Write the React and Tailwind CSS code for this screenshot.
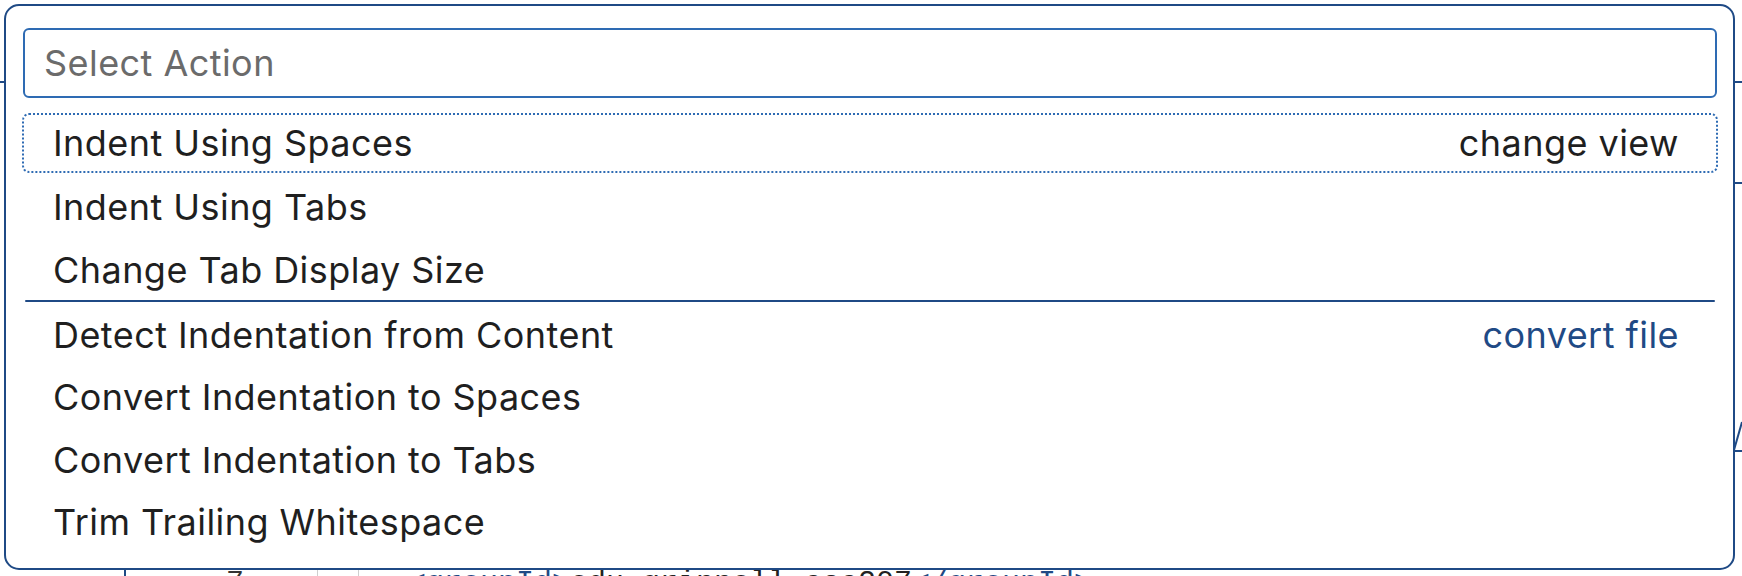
import React from 'react';

const firstGroup = [
  { label: 'Indent Using Spaces', hint: 'change view', focused: true },
  { label: 'Indent Using Tabs' },
  { label: 'Change Tab Display Size' },
];

const secondGroup = [
  { label: 'Detect Indentation from Content', hint: 'convert file', hintColor: 'text-[#1f4a85]' },
  { label: 'Convert Indentation to Spaces' },
  { label: 'Convert Indentation to Tabs' },
  { label: 'Trim Trailing Whitespace' },
];

const ActionRow = ({ label, hint, hintColor, focused, tight }) => (
  <div
    className={`flex items-center justify-between h-[60px] ${tight ? 'mb-[2.5px]' : 'mb-[3.5px]'} pl-[29px] pr-[37px] rounded-[7px] border-2 ${focused ? 'border-dotted border-[#2e6bb3]' : 'border-transparent'}`}
  >
    <span className="text-[#1f1f1f]">{label}</span>
    {hint && <span className={hintColor || 'text-[#1f1f1f]'}>{hint}</span>}
  </div>
);

// page behind the palette, only its edges show
const Backdrop = () => (
  <div className="flex flex-col h-[576px]">
    <div className="h-[83px] border-b-2 border-[#1f4a85]" />
    <div className="h-[101px] flex justify-end">
      <div className="w-[20px] border-b-2 border-[#1f4a85]" />
    </div>
    <div className="h-[268px] flex justify-end items-end">
      <div className="w-[20px] h-[40px] border-b-2 border-[#1f4a85] flex items-end justify-end">
        <svg width="9" height="32" viewBox="0 0 9 32" className="block">
          <line x1="1" y1="32" x2="9" y2="4" stroke="#1f4a85" strokeWidth="2" />
        </svg>
      </div>
    </div>
    <div className="flex-1" />
    <div className="h-[8px] overflow-hidden flex pl-[124px] font-['Liberation_Mono',monospace] text-[30px] leading-[30px]">
      <div className="w-[193px] border-l-2 border-[#1f4a85] text-right pr-[73px] text-[#333]">7</div>
      <div className="w-[41px] border-l border-[#cfcfcf]" />
      <div className="border-l border-[#cfcfcf] pl-[49px] whitespace-nowrap">
        <span className="text-[#1f4a85]">&lt;groupId&gt;</span>
        <span className="text-[#222]">edu.grinnell.csc207</span>
        <span className="text-[#1f4a85]">&lt;/groupId&gt;</span>
      </div>
    </div>
  </div>
);

export default function App() {
  return (
    <div className="relative w-[1742px] h-[576px] overflow-hidden bg-white font-['Inter',sans-serif]">
      <Backdrop />
      <div className="absolute left-[4px] top-[4px] w-[1731px] h-[566px] bg-white border-2 border-[#1f4a85] rounded-[15px] pl-[17px] pr-[16px] pt-[22px] text-[36px] tracking-[0.45px] leading-none">
        <div className="h-[70px] border-2 border-[#2e6bb3] rounded-[6px] flex items-center pl-[19px] text-[#6b6b6b]">
          Select Action
        </div>
        <div className="mt-[15px] -mx-[1px]">
          {firstGroup.map(item => (
            <ActionRow key={item.label} {...item} />
          ))}
          <div className="h-[2px] mx-[3px] -mt-[4px] mb-[3px] bg-[#1f4a85] rounded-full" />
          {secondGroup.map(item => (
            <ActionRow key={item.label} {...item} tight />
          ))}
        </div>
      </div>
    </div>
  );
}
